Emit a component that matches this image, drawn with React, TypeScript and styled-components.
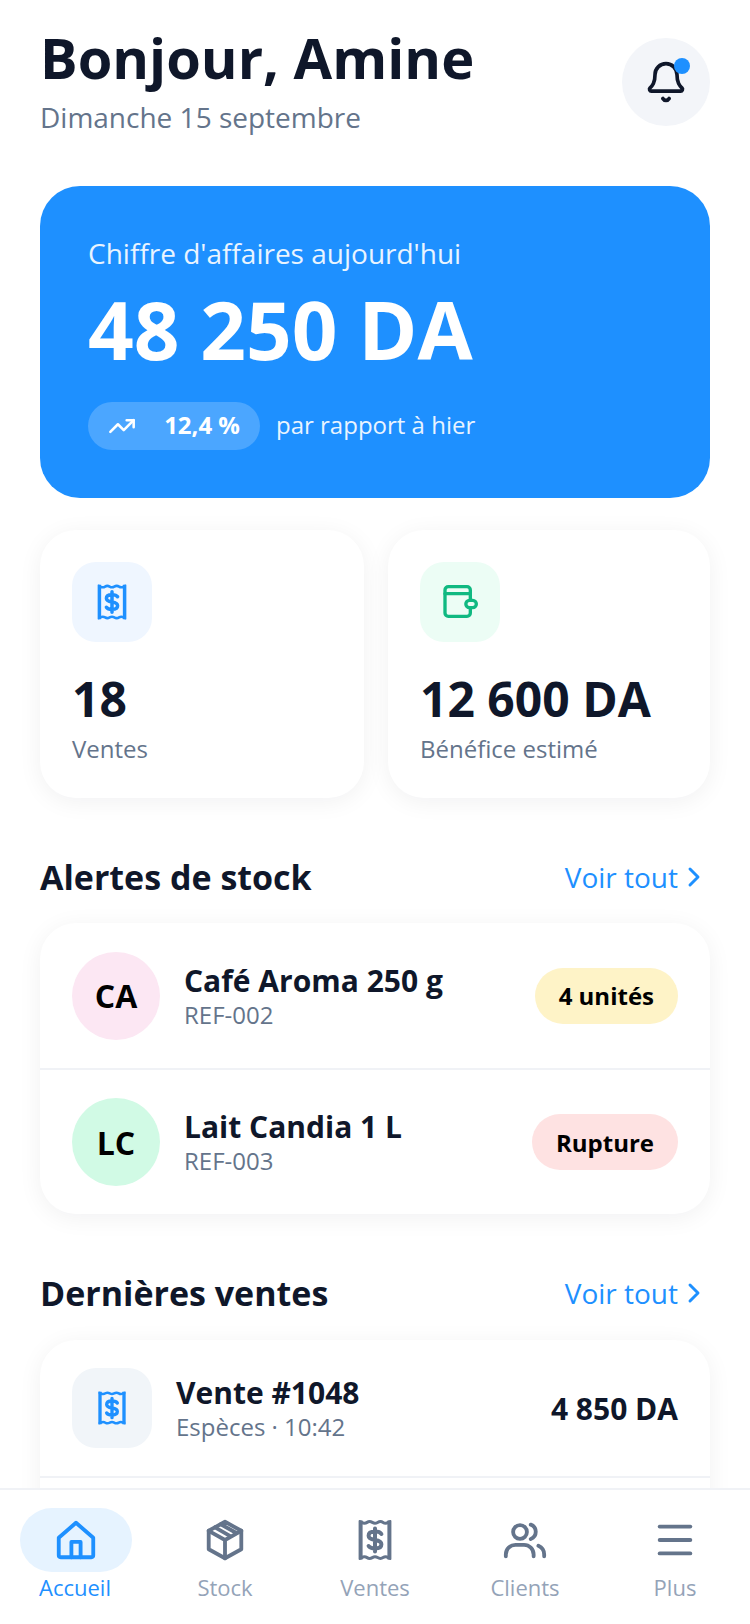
import styled, { createGlobalStyle } from "styled-components"
import { Bell, ChevronRight, Menu, TrendingUp } from "lucide-react"

const GlobalStyle = createGlobalStyle`
	html, body {
		margin: 0;
		padding: 0;
		background: #ffffff;
	}
	* {
		box-sizing: border-box;
	}
`

const Screen = styled.div`
	position: relative;
	width: 750px;
	height: 1624px;
	overflow: hidden;
	background: #ffffff;
	font-family: "Open Sans", sans-serif;
	color: #0f172a;
`

const Content = styled.main`
	padding: 20px 40px 0;
	display: flex;
	flex-direction: column;
`

const Header = styled.header`
	display: flex;
	justify-content: space-between;
	align-items: flex-start;
`

const Title = styled.h1`
	margin: 0;
	font-size: 56px;
	line-height: 74px;
	font-weight: 700;
`

const DateLine = styled.p`
	margin: 3px 0 0;
	font-size: 28px;
	line-height: 40px;
	color: #64748b;
`

const BellButton = styled.div`
	position: relative;
	width: 88px;
	height: 88px;
	margin-top: 18px;
	border-radius: 50%;
	background: #f3f5f9;
	display: flex;
	align-items: center;
	justify-content: center;
`

const BellDot = styled.span`
	position: absolute;
	top: 20px;
	right: 20px;
	width: 16px;
	height: 16px;
	border-radius: 50%;
	background: #1e90ff;
`

const Hero = styled.section`
	margin-top: 49px;
	height: 312px;
	padding: 48px;
	border-radius: 40px;
	background: #1e90ff;
	color: #ffffff;
`

const HeroLabel = styled.div`
	font-size: 28px;
	line-height: 38px;
	opacity: 0.9;
`

const HeroValue = styled.div`
	margin-top: 9px;
	font-size: 80px;
	line-height: 96px;
	font-weight: 700;
`

const HeroFoot = styled.div`
	margin-top: 25px;
	display: flex;
	align-items: center;
	gap: 16px;
`

const TrendPill = styled.div`
	width: 172px;
	height: 48px;
	padding: 0 20px;
	border-radius: 24px;
	background: rgba(255, 255, 255, 0.2);
	display: flex;
	align-items: center;
	justify-content: space-between;
	font-size: 24px;
	font-weight: 700;

	span {
		margin-top: -4px;
	}
`

const HeroNote = styled.span`
	margin-top: -4px;
	font-size: 24px;
	opacity: 0.9;
`

const StatGrid = styled.section`
	margin-top: 32px;
	display: grid;
	grid-template-columns: 324px 322px;
	gap: 24px;
`

const StatCard = styled.div`
	height: 268px;
	padding: 32px;
	border-radius: 36px;
	background: #ffffff;
	box-shadow: 0 4px 24px rgba(15, 23, 42, 0.06);
`

const IconTile = styled.div<{ $bg: string; $color: string }>`
	width: 80px;
	height: 80px;
	border-radius: 24px;
	background: ${(p) => p.$bg};
	color: ${(p) => p.$color};
	display: flex;
	align-items: center;
	justify-content: center;
`

const StatValue = styled.div`
	margin-top: 27px;
	font-size: 48px;
	line-height: 60px;
	font-weight: 700;
`

const StatLabel = styled.div`
	margin-top: 3px;
	font-size: 24px;
	line-height: 34px;
	color: #64748b;
`

const SectionHead = styled.div`
	margin-top: 55px;
	height: 48px;
	display: flex;
	justify-content: space-between;
	align-items: center;
`

const SectionTitle = styled.h2`
	margin: 0;
	font-size: 34px;
	font-weight: 700;
`

const SeeAll = styled.a`
	display: flex;
	align-items: center;
	font-size: 28px;
	color: #1e90ff;
`

const ListCard = styled.section<{ $top: number }>`
	margin-top: ${(p) => p.$top}px;
	border-radius: 36px;
	background: #ffffff;
	box-shadow: 0 4px 24px rgba(15, 23, 42, 0.06);
`

const Row = styled.div`
	display: flex;
	align-items: center;
	height: 145px;
	padding: 0 32px;

	& + & {
		height: 146px;
		border-top: 2px solid #f0f2f6;
	}
`

const Avatar = styled.div<{ $bg: string }>`
	width: 88px;
	height: 88px;
	border-radius: 50%;
	background: ${(p) => p.$bg};
	display: flex;
	align-items: center;
	justify-content: center;
	font-size: 32px;
	font-weight: 700;
	color: #000000;
`

const RowText = styled.div<{ $gap: number }>`
	flex: 1;
	margin-left: ${(p) => p.$gap}px;
`

const RowTitle = styled.div`
	font-size: 30px;
	line-height: 38px;
	font-weight: 700;
`

const RowSub = styled.div`
	font-size: 24px;
	line-height: 30px;
	color: #64748b;
`

const Badge = styled.span<{ $bg: string }>`
	height: 56px;
	padding: 0 24px;
	border-radius: 28px;
	background: ${(p) => p.$bg};
	display: flex;
	align-items: center;
	font-size: 24px;
	font-weight: 700;
	color: #000000;
`

const SaleRow = styled(Row)`
	height: 138px;
	border-bottom: 2px solid #f0f2f6;
`

const SaleAmount = styled.span`
	font-size: 30px;
	font-weight: 700;
`

const SaleTail = styled.div`
	height: 200px;
`

const BottomNav = styled.nav`
	position: absolute;
	left: 0;
	right: 0;
	bottom: 0;
	height: 136px;
	border-top: 2px solid #f0f2f6;
	background: #ffffff;
	display: grid;
	grid-template-columns: repeat(5, 1fr);
`

const NavItem = styled.div<{ $active?: boolean }>`
	display: flex;
	flex-direction: column;
	align-items: center;
	font-size: 22px;
	line-height: 34px;
	color: ${(p) => (p.$active ? "#1e90ff" : "#94a3b8")};
`

const NavIcon = styled.div<{ $active?: boolean }>`
	width: 112px;
	height: 64px;
	margin: 18px 0 -2px ${(p) => (p.$active ? "2px" : "0")};
	border-radius: 32px;
	background: ${(p) => (p.$active ? "#e6f3ff" : "transparent")};
	display: flex;
	align-items: center;
	justify-content: center;
	color: ${(p) => (p.$active ? "#1e90ff" : "#64748b")};
`

type IconProps = { size: number }

const ReceiptIcon = ({ size }: IconProps) => (
	<svg width={size} height={size} viewBox="0 0 24 24" fill="none" stroke="currentColor" strokeWidth="2">
		<path d="M4.800 2.200v19.600M19.200 2.200v19.600" />
		<path d="M4 2.800c1.300 0 1.300.8 2.700.8s1.300-.8 2.600-.8 1.400.8 2.700.8 1.300-.8 2.700-.8 1.300.8 2.600.8 1.400-.8 2.700-.8" strokeWidth="1.500" />
		<path d="M4 21.200c1.300 0 1.300-.8 2.700-.8s1.300.8 2.600.8 1.400-.8 2.700-.8 1.300.8 2.700.8 1.300-.8 2.600-.8 1.400.8 2.700.8" strokeWidth="1.500" />
		<path d="M15.200 9c-.5-.8-1.500-1.200-3.200-1.200-2 0-3.200.8-3.200 2.100 0 1.400 1.300 1.800 3.200 2.100s3.200.8 3.200 2.100c0 1.300-1.200 2.100-3.200 2.100-1.700 0-2.700-.4-3.200-1.200M12 6.200v11.600" strokeLinecap="round" />
	</svg>
)

const WalletIcon = ({ size }: IconProps) => (
	<svg width={size} height={size} viewBox="0 0 24 24" fill="none" stroke="currentColor" strokeWidth="2" strokeLinecap="round" strokeLinejoin="round">
		<path d="M18.200 11V4.800a2 2 0 0 0-2-2H5a2 2 0 0 0-2 2v13.800a2 2 0 0 0 2 2h11.200a2 2 0 0 0 2-2v-3.200" />
		<path d="M3 7h15.200" />
		<rect x="15.500" y="11" width="6.300" height="4.400" rx="2.200" />
	</svg>
)

const HomeIcon = ({ size }: IconProps) => (
	<svg width={size} height={size} viewBox="0 0 24 24" fill="none" stroke="currentColor" strokeWidth="2" strokeLinecap="round" strokeLinejoin="round">
		<path d="M3 10.800 12 3l9 7.800V20a1 1 0 0 1-1 1H4a1 1 0 0 1-1-1Z" />
		<path d="M9.600 21v-8h4.800v8" />
	</svg>
)

const BoxIcon = ({ size }: IconProps) => (
	<svg width={size} height={size} viewBox="0 0 24 24" fill="none" stroke="currentColor" strokeWidth="2" strokeLinecap="round" strokeLinejoin="round">
		<path d="M12 2.500 20.500 7.200v9.600L12 21.500l-8.500-4.700V7.200Z" />
		<path d="M3.500 7.200 12 12l8.500-4.800M12 12v9.500M6.800 5.400 15.200 10.200M9.800 3.800 18.200 8.500" />
	</svg>
)

const ClientsIcon = ({ size }: IconProps) => (
	<svg width={size} height={size} viewBox="0 0 24 24" fill="none" stroke="currentColor" strokeWidth="2" strokeLinecap="round" strokeLinejoin="round">
		<circle cx="9.400" cy="7.800" r="3.600" />
		<path d="M2 20.500v-1a5 5 0 0 1 5-5h4.500a5 5 0 0 1 5 5v1M15 4a4 4 0 0 1 0 7.500M22 20.500v-1a5 5 0 0 0-3-4.500" />
	</svg>
)

const App = () => (
	<Screen>
		<GlobalStyle />
		<Content>
			<Header>
				<div>
					<Title>Bonjour, Amine</Title>
					<DateLine>Dimanche 15 septembre</DateLine>
				</div>
				<BellButton>
					<Bell size={44} color="#0f172a" strokeWidth={2} />
					<BellDot />
				</BellButton>
			</Header>

			<Hero>
				<HeroLabel>Chiffre d'affaires aujourd'hui</HeroLabel>
				<HeroValue>48 250 DA</HeroValue>
				<HeroFoot>
					<TrendPill>
						<TrendingUp size={28} strokeWidth={2.2} />
						<span>12,4 %</span>
					</TrendPill>
					<HeroNote>par rapport à hier</HeroNote>
				</HeroFoot>
			</Hero>

			<StatGrid>
				<StatCard>
					<IconTile $bg="#eff6ff" $color="#1e90ff">
						<ReceiptIcon size={42} />
					</IconTile>
					<StatValue>18</StatValue>
					<StatLabel>Ventes</StatLabel>
				</StatCard>
				<StatCard>
					<IconTile $bg="#ecfdf5" $color="#10b981">
						<WalletIcon size={40} />
					</IconTile>
					<StatValue>12 600 DA</StatValue>
					<StatLabel>Bénéfice estimé</StatLabel>
				</StatCard>
			</StatGrid>

			<SectionHead>
				<SectionTitle>Alertes de stock</SectionTitle>
				<SeeAll>
					Voir tout <ChevronRight size={32} strokeWidth={2.2} />
				</SeeAll>
			</SectionHead>
			<ListCard $top={22}>
				<Row>
					<Avatar $bg="#fce7f3">CA</Avatar>
					<RowText $gap={24}>
						<RowTitle>Café Aroma 250 g</RowTitle>
						<RowSub>REF-002</RowSub>
					</RowText>
					<Badge $bg="#fef3c7">4 unités</Badge>
				</Row>
				<Row>
					<Avatar $bg="#d1fae5">LC</Avatar>
					<RowText $gap={24}>
						<RowTitle>Lait Candia 1 L</RowTitle>
						<RowSub>REF-003</RowSub>
					</RowText>
					<Badge $bg="#fee2e2">Rupture</Badge>
				</Row>
			</ListCard>

			<SectionHead>
				<SectionTitle>Dernières ventes</SectionTitle>
				<SeeAll>
					Voir tout <ChevronRight size={32} strokeWidth={2.2} />
				</SeeAll>
			</SectionHead>
			<ListCard $top={23}>
				<SaleRow>
					<IconTile $bg="#f1f5f9" $color="#1e90ff">
						<ReceiptIcon size={40} />
					</IconTile>
					<RowText $gap={24}>
						<RowTitle>Vente #1048</RowTitle>
						<RowSub>Espèces · 10:42</RowSub>
					</RowText>
					<SaleAmount>4 850 DA</SaleAmount>
				</SaleRow>
				<SaleTail />
			</ListCard>
		</Content>

		<BottomNav>
			<NavItem $active>
				<NavIcon $active>
					<HomeIcon size={46} />
				</NavIcon>
				Accueil
			</NavItem>
			<NavItem>
				<NavIcon>
					<BoxIcon size={46} />
				</NavIcon>
				Stock
			</NavItem>
			<NavItem>
				<NavIcon>
					<ReceiptIcon size={48} />
				</NavIcon>
				Ventes
			</NavItem>
			<NavItem>
				<NavIcon>
					<ClientsIcon size={46} />
				</NavIcon>
				Clients
			</NavItem>
			<NavItem>
				<NavIcon>
					<Menu size={46} strokeWidth={2} />
				</NavIcon>
				Plus
			</NavItem>
		</BottomNav>
	</Screen>
)

export default App
